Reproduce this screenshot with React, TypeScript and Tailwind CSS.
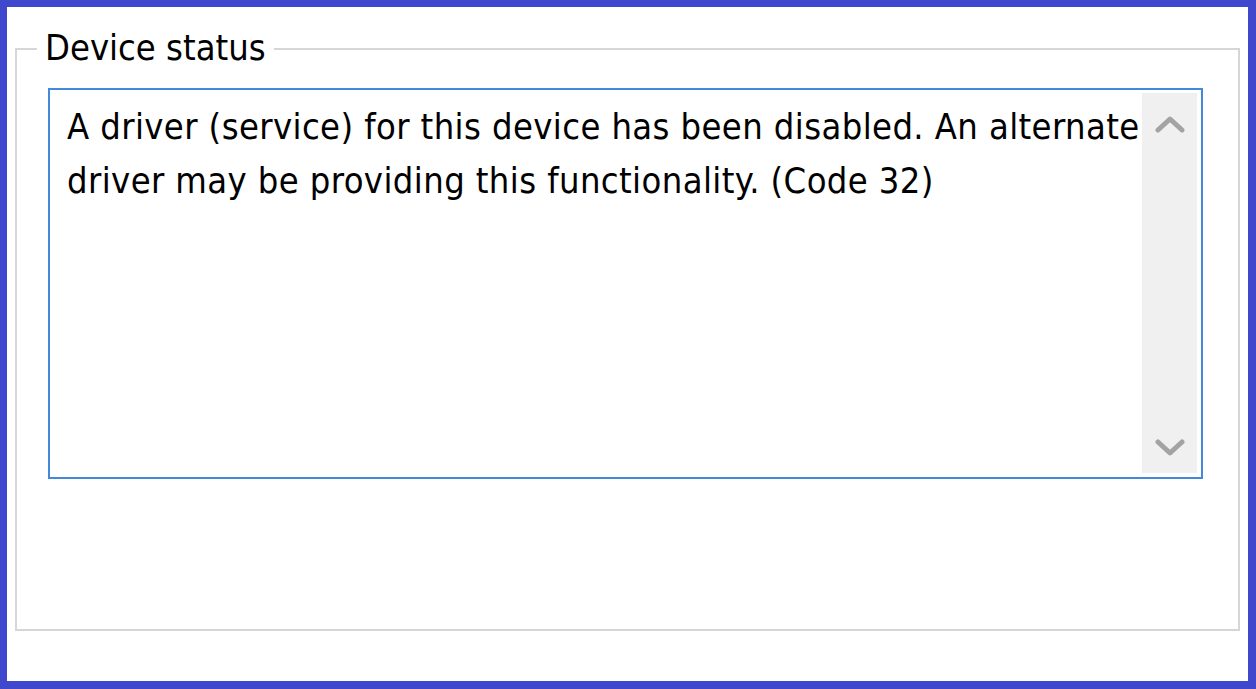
import React from 'react';

const Chevron = ({ up }: { up?: boolean }) => (
  <svg width="30" height="18" viewBox="0 0 30 18" className="block">
    <polyline
      points={up ? '3,15 15,4 27,15' : '3,3 15,14 27,3'}
      fill="none"
      stroke="#a3a3a3"
      strokeWidth="5"
      strokeLinecap="round"
      strokeLinejoin="round"
    />
  </svg>
);

export default function App() {
  return (
    <div className="box-border h-[689px] w-[1256px] border-t-[7px] border-r-[8px] border-b-[8px] border-l-[7px] border-[#3f48cc] bg-white font-['DejaVu_Sans_Condensed','DejaVu_Sans',sans-serif] text-black">
      <div className="relative ml-[8px] mt-[41px] box-border h-[583px] w-[1225px] border-2 border-[#d6d6d6]">
        <span className="absolute left-[20px] top-[-20px] bg-white px-[8px] text-[36px] leading-none">Device status</span>
        <div className="ml-[31px] mt-[38px] box-border flex h-[391px] w-[1155px] border-2 border-[#4289dc]">
          <div className="flex-1 pl-[17px] pt-[10px] text-[36px] leading-[54px] tracking-[0.4px]">
            <div className="whitespace-nowrap">A driver (service) for this device has been disabled. An alternate</div>
            <div className="whitespace-nowrap">driver may be providing this functionality. (Code 32)</div>
          </div>
          <div className="mb-[4px] mr-[4px] mt-[3px] flex w-[55px] flex-col items-center justify-between bg-[#f0f0f0] pb-[16px] pt-[22px]">
            <Chevron up />
            <Chevron />
          </div>
        </div>
      </div>
    </div>
  );
}
